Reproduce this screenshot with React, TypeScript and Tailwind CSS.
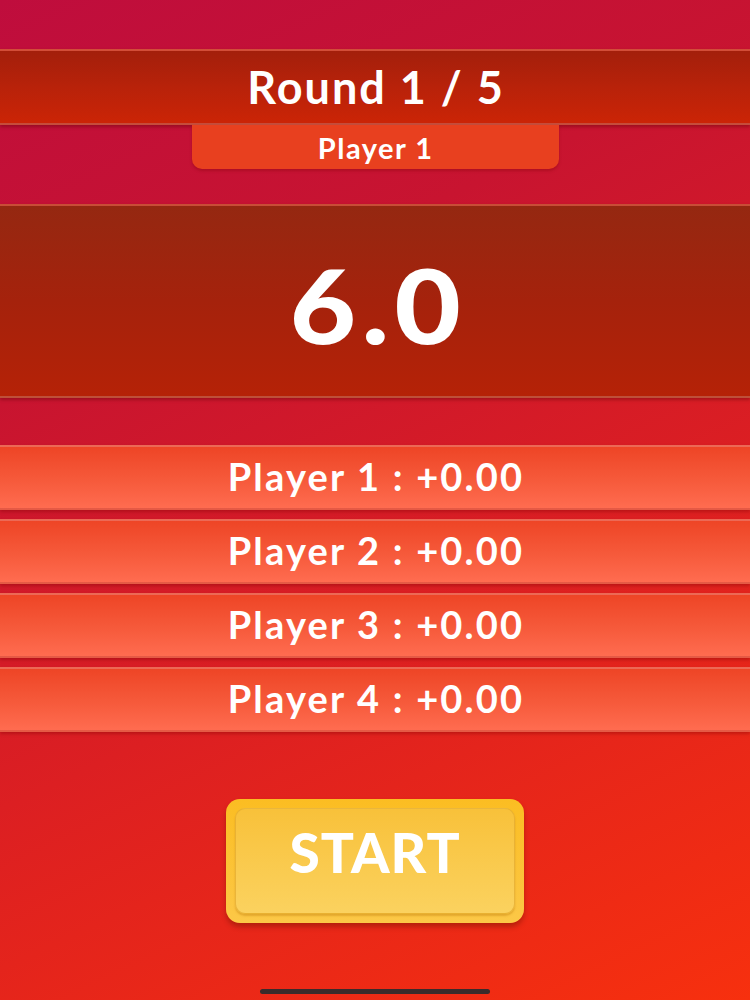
import React from "react";

const font = { fontFamily: "Lato, 'Open Sans', 'Noto Sans', sans-serif" };

export default function App() {
  const players = ["Player 1", "Player 2", "Player 3", "Player 4"];
  return (
    <div
      className="relative w-[750px] h-[1000px] overflow-hidden flex flex-col bg-[linear-gradient(155deg,#bf0d3d_0%,#c81430_30%,#dc1f22_60%,#f7300e_100%)]"
      style={font}
    >
      <div className="mt-[49px] h-[76px] w-full flex items-center justify-center border-y-2 border-[#d4604e]/70 bg-[linear-gradient(180deg,#a31f0b_0%,#b8220a_50%,#cb2406_100%)] shadow-[0_2px_3px_rgba(80,0,0,0.35)]">
        <span className="text-white font-bold text-[45px] leading-none tracking-[2px] pl-[2px]">Round 1 / 5</span>
      </div>
      <div className="mx-auto w-[367px] h-[44px] rounded-b-[10px] bg-[#e8401f] flex items-center justify-center shadow-[0_2px_3px_rgba(120,0,0,0.3)]">
        <span className="text-white font-bold text-[29px] leading-none tracking-[1.5px] pl-[1.5px]">Player 1</span>
      </div>
      <div className="mt-[35px] h-[194px] w-full flex items-center justify-center border-y-2 border-[#d0604a]/70 bg-[linear-gradient(180deg,#952811_0%,#a5220c_50%,#b52207_100%)] shadow-[0_2px_3px_rgba(80,0,0,0.35)]">
        <span className="inline-block text-white font-black text-[102px] leading-none tracking-[5px] pl-[5px] pt-[8px] scale-x-[1.12]">6.0</span>
      </div>
      <div className="mt-[47px] flex flex-col gap-[9px]">
        {players.map((p) => (
          <div
            key={p}
            className="h-[65px] w-full flex items-center justify-center border-y-2 border-[#e0685a]/60 bg-[linear-gradient(180deg,#ee4526_0%,#f65a3b_55%,#ff6c50_100%)] shadow-[0_2px_3px_rgba(120,0,0,0.35)]"
          >
            <span className="text-white font-bold text-[38px] leading-none tracking-[2.2px] pl-[2px] -mt-[4px]">{p} : +0.00</span>
          </div>
        ))}
      </div>
      <div className="mt-[67px] mx-auto w-[298px] h-[124px] rounded-[14px] bg-[linear-gradient(180deg,#fbbd22_0%,#fcc847_100%)] p-[9px] shadow-[0_4px_5px_rgba(120,20,0,0.45)]">
        <div className="w-full h-full rounded-[10px] border border-[#e2aa2e]/70 bg-[linear-gradient(180deg,#f8c13a_0%,#fbd25f_100%)] shadow-[0_2px_2px_rgba(180,110,0,0.35)] flex items-start justify-center pt-[16px]">
          <span className="text-white font-black text-[55px] leading-none tracking-[1px]">START</span>
        </div>
      </div>
      <div className="absolute left-[260px] top-[989px] w-[230px] h-[5px] rounded-full bg-[#3b2b2b]" />
    </div>
  );
}
